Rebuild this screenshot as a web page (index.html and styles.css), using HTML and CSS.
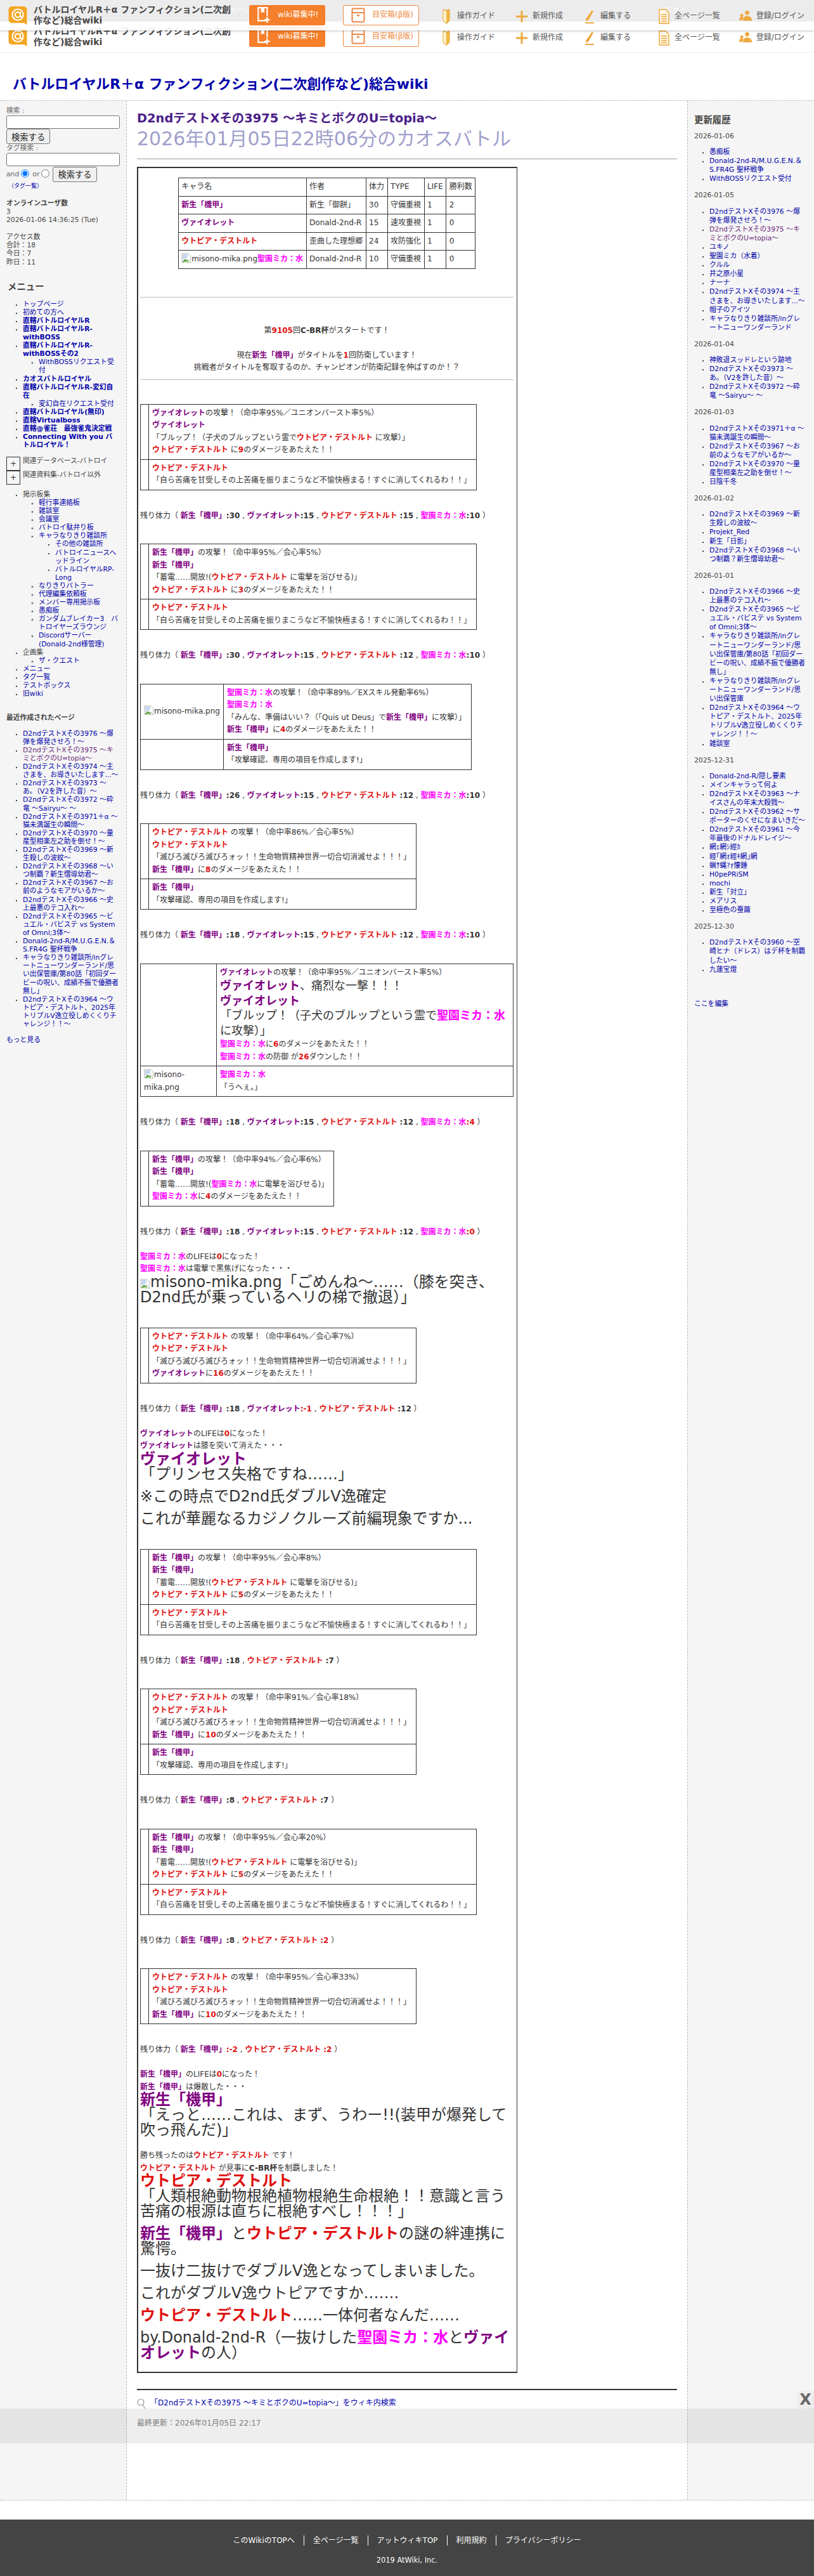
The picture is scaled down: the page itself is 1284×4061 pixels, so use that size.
FILE: index.html
```html
<!DOCTYPE html>
<html lang="ja">
<head>
<meta charset="utf-8">
<title>D2ndテストXその3975 〜キミとボクのU=topia〜</title>
<link rel="stylesheet" href="styles.css">
</head>
<body>
<svg class="sprite" width="0" height="0" aria-hidden="true">
  <symbol id="i-logo" viewBox="0 0 32 32"><path d="M6 0h20a6 6 0 0 1 6 6v26l-5-3H6a6 6 0 0 1-6-6V6a6 6 0 0 1 6-6z" fill="#f5a623"/><circle cx="16" cy="14.500" r="9.500" fill="none" stroke="#fff" stroke-width="2.400"/><circle cx="16" cy="14.500" r="4.500" fill="none" stroke="#fff" stroke-width="2.400"/><path d="M20.500 10v6a3 3 0 0 0 5 2" fill="none" stroke="#fff" stroke-width="2.200"/></symbol>
  <symbol id="i-wiki" viewBox="0 0 20 24"><path d="M14 20H2V1h13v12" fill="none" stroke="#fff" stroke-width="2"/><path d="M6 1v8l2.500-2 2.500 2V1z" fill="#fff"/><path d="M15 14v9M11 18.500h8" stroke="#fff" stroke-width="2"/></symbol>
  <symbol id="i-box" viewBox="0 0 22 24"><rect x="1.500" y="1.500" width="19" height="21" rx="2" fill="none" stroke="#e8894a" stroke-width="2"/><path d="M1.500 8h19" stroke="#e8894a" stroke-width="2"/><rect x="9" y="11" width="4" height="2.500" fill="#e8894a"/></symbol>
  <symbol id="i-guide" viewBox="0 0 14 24"><path d="M2 1c3 0 5 1 5 3 0-2 2-3 5-3v16c0 3-3 5-5 6-2-1-5-3-5-6z" fill="#f0b840" stroke="#e8a33a"/><path d="M2.500 2c2.500 0 4 1 4.500 2.500V22c-2-1-4.500-3-4.500-5z" fill="#fff3d0"/></symbol>
  <symbol id="i-plus" viewBox="0 0 20 24"><path d="M10 3v18M1 12h18" stroke="#eda93f" stroke-width="3"/></symbol>
  <symbol id="i-pen" viewBox="0 0 18 24"><path d="M3 16L13 2l2 1.500L7 18l-4 1z" fill="#eda93f"/><path d="M2 22h14" stroke="#eda93f" stroke-width="2"/></symbol>
  <symbol id="i-doc" viewBox="0 0 18 24"><path d="M2 1h10l5 5v17H2z" fill="#fff8e8" stroke="#eda93f" stroke-width="1.500"/><path d="M5 9h9M5 12.500h9M5 16h9M5 19.500h9" stroke="#eda93f" stroke-width="1.500"/></symbol>
  <symbol id="i-user" viewBox="0 0 26 24"><circle cx="16" cy="5" r="4" fill="#eda93f"/><circle cx="6" cy="10" r="3" fill="#eda93f"/><path d="M8 20c0-6 3-9 8-9s9 3 9 9z" fill="#eda93f"/><path d="M1 19c0-4 2-6 5-6 1 0 2 0 3 1-1 2-2 3-2 5z" fill="#eda93f"/></symbol>
  <symbol id="i-broken" viewBox="0 0 16 16"><path d="M1 1h10l4 4v5l-3 2-2-2-3 3-2-1-4 3z" fill="#fff" stroke="#b5b5b5"/><path d="M2 13l4-4 3 2 3 1-9 3z" fill="#6aa84f"/><path d="M2 2h8v5l-8 3z" fill="#c6d8f0"/><path d="M7 16l3-3 2 2 3-2v2H7z" fill="#6aa84f"/></symbol>
  <symbol id="i-search" viewBox="0 0 14 18"><circle cx="6" cy="7" r="5" fill="none" stroke="#999" stroke-width="1.200"/><path d="M9.500 11l3 6" stroke="#999" stroke-width="1.200"/></symbol>
</svg>

<div class="darkbar"><span class="dark-item">ページ検索</span><span class="dark-item">RSS</span><span class="dark-item dark-right">メニュー</span></div>

<header class="site-header">
  <a class="brand" href="#"><svg class="logo"><use href="#i-logo"/></svg><span class="brand-name">バトルロイヤルR＋α ファンフィクション(二次創作など)総合wiki</span></a>
  <a class="pill pill-fill" href="#"><svg class="pill-icon"><use href="#i-wiki"/></svg>wiki募集中!</a>
  <a class="pill pill-line" href="#"><svg class="pill-icon"><use href="#i-box"/></svg>目安箱(β版)</a>
  <nav class="tools">
    <a class="tool" href="#"><svg class="tool-icon"><use href="#i-guide"/></svg>操作ガイド</a>
    <a class="tool" href="#"><svg class="tool-icon"><use href="#i-plus"/></svg>新規作成</a>
    <a class="tool tool-gap" href="#"><svg class="tool-icon"><use href="#i-pen"/></svg>編集する</a>
    <a class="tool tool-tight" href="#"><svg class="tool-icon"><use href="#i-doc"/></svg>全ページ一覧</a>
    <a class="tool" href="#"><svg class="tool-icon"><use href="#i-user"/></svg>登録/ログイン</a>
  </nav>
</header>

<header class="site-header sticky">
  <a class="brand" href="#"><svg class="logo"><use href="#i-logo"/></svg><span class="brand-name">バトルロイヤルR＋α ファンフィクション(二次創作など)総合wiki</span></a>
  <a class="pill pill-fill" href="#"><svg class="pill-icon"><use href="#i-wiki"/></svg>wiki募集中!</a>
  <a class="pill pill-line" href="#"><svg class="pill-icon"><use href="#i-box"/></svg>目安箱(β版)</a>
  <nav class="tools">
    <a class="tool" href="#"><svg class="tool-icon"><use href="#i-guide"/></svg>操作ガイド</a>
    <a class="tool" href="#"><svg class="tool-icon"><use href="#i-plus"/></svg>新規作成</a>
    <a class="tool tool-gap" href="#"><svg class="tool-icon"><use href="#i-pen"/></svg>編集する</a>
    <a class="tool tool-tight" href="#"><svg class="tool-icon"><use href="#i-doc"/></svg>全ページ一覧</a>
    <a class="tool" href="#"><svg class="tool-icon"><use href="#i-user"/></svg>登録/ログイン</a>
  </nav>
</header>

<h1 class="wiki-title"><a href="#">バトルロイヤルR＋α ファンフィクション(二次創作など)総合wiki</a></h1>

<div class="columns">
  <aside class="side side-left">
    <form class="search">
      <label class="search-label">検索 :</label>
      <input class="text-input" type="text">
      <button class="btn" type="button">検索する</button>
      <label class="search-label">タグ検索 :</label>
      <input class="text-input" type="text">
      <div class="search-opts"><span>and</span><input class="radio" type="radio" name="op" checked><span>or</span><input class="radio" type="radio" name="op"><button class="btn" type="button">検索する</button></div>
      <a class="tag-list" href="#">（タグ一覧）</a>
    </form>
    <p class="stat"><b>オンラインユーザ数</b><br>3<br>2026-01-06 14:36:25 (Tue)</p>
    <p class="stat">アクセス数<br>合計：18<br>今日：7<br>昨日：11</p>
    <h3 class="side-title menu-title">メニュー</h3>
    <ul class="list">
      <li><a href="#">トップページ</a></li>
      <li><a href="#">初めての方へ</a></li>
      <li><a href="#"><b>直轄バトルロイヤルR</b></a></li>
      <li><a href="#"><b>直轄バトルロイヤルR-withBOSS</b></a></li>
      <li><a href="#"><b>直轄バトルロイヤルR-withBOSSその2</b></a>
        <ul><li><a href="#">WithBOSSリクエスト受付</a></li></ul></li>
      <li><a href="#"><b>カオスバトルロイヤル</b></a></li>
      <li><a href="#"><b>直轄バトルロイヤルR-変幻自在</b></a>
        <ul><li><a href="#">変幻自在リクエスト受付</a></li></ul></li>
      <li><a href="#"><b>直轄バトルロイヤル(無印)</b></a></li>
      <li><a href="#"><b>直轄Virtualboss</b></a></li>
      <li><a href="#"><b>直轄@雀荘　最強雀鬼決定戦</b></a></li>
      <li><a href="#"><b>Connecting With you バトルロイヤル！</b></a></li>
    </ul>
    <div class="toggles">
      <div class="toggle"><span class="toggle-btn">+</span><span class="toggle-text">関連データベース-バトロイ</span></div>
      <div class="toggle"><span class="toggle-btn">+</span><span class="toggle-text">関連資料集-バトロイ以外</span></div>
    </div>
    <ul class="list list-boards">
      <li>掲示板集
        <ul>
          <li><a href="#">軽行事連絡板</a></li>
          <li><a href="#">雑談室</a></li>
          <li><a href="#">会議室</a></li>
          <li><a href="#">バトロイ駄弁り板</a></li>
          <li><a href="#">キャラなりきり雑談所</a>
            <ul>
              <li><a href="#">その他の雑談所</a></li>
              <li><a href="#">バトロイニュースヘッドライン</a></li>
              <li><a href="#">バトルロイヤルRP-Long</a></li>
            </ul></li>
          <li><a href="#">なりきりバトラー</a></li>
          <li><a href="#">代理編集依頼板</a></li>
          <li><a href="#">メンバー専用掲示板</a></li>
          <li><a href="#">愚痴板</a></li>
          <li><a href="#">ガンダムブレイカー3　バトロイヤーズラウンジ</a></li>
          <li><a href="#">Discordサーバー(Donald-2nd様管理)</a></li>
        </ul></li>
      <li>企画集
        <ul><li><a href="#">ザ・クエスト</a></li></ul></li>
      <li><a href="#">メニュー</a></li>
      <li><a href="#">タグ一覧</a></li>
      <li><a href="#">テストボックス</a></li>
      <li><a href="#">旧wiki</a></li>
    </ul>
    <h4 class="recent-title">最近作成されたページ</h4>
    <ul class="list list-recent">
      <li><a href="#">D2ndテストXその3976 〜爆弾を爆発させろ！〜</a></li>
      <li><a class="seen" href="#">D2ndテストXその3975 〜キミとボクのU=topia〜</a></li>
      <li><a href="#">D2ndテストXその3974 〜主さまを、お導きいたします...〜</a></li>
      <li><a href="#">D2ndテストXその3973 〜あ。（V2を許した音）〜</a></li>
      <li><a href="#">D2ndテストXその3972 〜砕竜 〜Sairyu〜 〜</a></li>
      <li><a href="#">D2ndテストXその3971＋α 〜猫未満誕生の瞬間〜</a></li>
      <li><a href="#">D2ndテストXその3970 〜量産型相楽左之助を倒せ！〜</a></li>
      <li><a href="#">D2ndテストXその3969 〜新生殺しの波紋〜</a></li>
      <li><a href="#">D2ndテストXその3968 〜いつ制覇？新生慴導幼君〜</a></li>
      <li><a href="#">D2ndテストXその3967 〜お前のようなモアがいるか〜</a></li>
      <li><a href="#">D2ndテストXその3966 〜史上最悪のテコ入れ〜</a></li>
      <li><a href="#">D2ndテストXその3965 〜ビュエル・バビステ vs System of Omni;3体〜</a></li>
      <li><a href="#">Donald-2nd-R/M.U.G.E.N.＆S.FR4G 聖杯戦争</a></li>
      <li><a href="#">キャラなりきり雑談所/inグレートニューワンダーランド/思い出保管庫/第80話「初回ダービーの呪い、成績不振で優勝者無し」</a></li>
      <li><a href="#">D2ndテストXその3964 〜ウトピア・デストルト、2025年トリプルV逸立役しめくくりチャレンジ！！〜</a></li>
    </ul>
    <p class="more"><a href="#">もっと見る</a></p>
  </aside>

  <main class="main">
    <h2 class="page-title">D2ndテストXその3975 〜キミとボクのU=topia〜</h2>
    <div class="battle-title">2026年01月05日22時06分のカオスバトル</div>
    <hr class="rule">
    <div class="arena">
      <table class="chara">
        <tr><td>キャラ名</td><td>作者</td><td>体力</td><td>TYPE</td><td>LIFE</td><td>勝利数</td></tr>
        <tr><td><b class="a">新生「機甲」</b></td><td>新生「御餅」</td><td>30</td><td>守備重視</td><td>1</td><td>2</td></tr>
        <tr><td><b class="v">ヴァイオレット</b></td><td>Donald-2nd-R</td><td>15</td><td>速攻重視</td><td>1</td><td>0</td></tr>
        <tr><td><b class="u">ウトピア・デストルト</b></td><td>歪曲した理想郷</td><td>24</td><td>攻防強化</td><td>1</td><td>0</td></tr>
        <tr><td><svg class="broken"><use href="#i-broken"/></svg>misono-mika.png<b class="m">聖園ミカ：水</b></td><td>Donald-2nd-R</td><td>10</td><td>守備重視</td><td>1</td><td>0</td></tr>
      </table>
      <hr class="thin thin-first">
      <p class="start">第<b class="n">9105</b>回<b>C-BR杯</b>がスタートです！<br><br>現在<b class="a">新生「機甲」</b>がタイトルを<b class="n">1</b>回防衛しています！<br>挑戦者がタイトルを奪取するのか、チャンピオンが防衛記録を伸ばすのか！？</p>
      <hr class="thin thin-last">

      <table class="log">
        <tr><td class="pic"></td><td><b class="v">ヴァイオレット</b>の攻撃！（命中率95%／ユニオンバースト率5%）<br><b class="v">ヴァイオレット</b><br>「ブルップ！（子犬のブルップという霊で<b class="u">ウトピア・デストルト</b> に攻撃）」<br><b class="u">ウトピア・デストルト</b> に<b class="n">9</b>のダメージをあたえた！！</td></tr>
        <tr><td class="pic"></td><td><b class="u">ウトピア・デストルト</b><br>「自ら苦痛を甘受しその上苦痛を振りまこうなど不愉快極まる！すぐに消してくれるわ！！」</td></tr>
      </table>
      <p class="hp">残り体力（ <b class="a">新生「機甲」</b><b>:30</b> , <b class="v">ヴァイオレット</b><b>:15</b> , <b class="u">ウトピア・デストルト</b> <b>:15</b> , <b class="m">聖園ミカ：水</b><b>:10</b> ）</p>

      <table class="log">
        <tr><td class="pic"></td><td><b class="a">新生「機甲」</b>の攻撃！（命中率95%／会心率5%）<br><b class="a">新生「機甲」</b><br>「蓄電……開放!(<b class="u">ウトピア・デストルト</b> に電撃を浴びせる)」<br><b class="u">ウトピア・デストルト</b> に<b class="n">3</b>のダメージをあたえた！！</td></tr>
        <tr><td class="pic"></td><td><b class="u">ウトピア・デストルト</b><br>「自ら苦痛を甘受しその上苦痛を振りまこうなど不愉快極まる！すぐに消してくれるわ！！」</td></tr>
      </table>
      <p class="hp">残り体力（ <b class="a">新生「機甲」</b><b>:30</b> , <b class="v">ヴァイオレット</b><b>:15</b> , <b class="u">ウトピア・デストルト</b> <b>:12</b> , <b class="m">聖園ミカ：水</b><b>:10</b> ）</p>

      <table class="log">
        <tr><td class="pic-img"><svg class="broken"><use href="#i-broken"/></svg>misono-mika.png</td><td><b class="m">聖園ミカ：水</b>の攻撃！（命中率89%／EXスキル発動率6%）<br><b class="m">聖園ミカ：水</b><br>「みんな、準備はいい？（「Quis ut Deus」で<b class="a">新生「機甲」</b>に攻撃）」<br><b class="a">新生「機甲」</b>に<b class="n">4</b>のダメージをあたえた！！</td></tr>
        <tr><td class="pic-img"></td><td><b class="a">新生「機甲」</b><br>「攻撃確認、専用の項目を作成します!」</td></tr>
      </table>
      <p class="hp">残り体力（ <b class="a">新生「機甲」</b><b>:26</b> , <b class="v">ヴァイオレット</b><b>:15</b> , <b class="u">ウトピア・デストルト</b> <b>:12</b> , <b class="m">聖園ミカ：水</b><b>:10</b> ）</p>

      <table class="log">
        <tr><td class="pic"></td><td><b class="u">ウトピア・デストルト</b> の攻撃！（命中率86%／会心率5%）<br><b class="u">ウトピア・デストルト</b><br>「滅びろ滅びろ滅びろォッ！！生命物質精神世界一切合切消滅せよ！！！」<br><b class="a">新生「機甲」</b>に<b class="n">8</b>のダメージをあたえた！！</td></tr>
        <tr><td class="pic"></td><td><b class="a">新生「機甲」</b><br>「攻撃確認、専用の項目を作成します!」</td></tr>
      </table>
      <p class="hp">残り体力（ <b class="a">新生「機甲」</b><b>:18</b> , <b class="v">ヴァイオレット</b><b>:15</b> , <b class="u">ウトピア・デストルト</b> <b>:12</b> , <b class="m">聖園ミカ：水</b><b>:10</b> ）</p>

      <table class="log log-full">
        <tr><td class="pic-wrap"></td><td><b class="v">ヴァイオレット</b>の攻撃！（命中率95%／ユニオンバースト率5%）<br><span class="mid"><b class="v">ヴァイオレット</b>、痛烈な一撃！！！<br><b class="v">ヴァイオレット</b><br>「ブルップ！（子犬のブルップという霊で<b class="m">聖園ミカ：水</b>に攻撃）」</span><br><b class="m">聖園ミカ：水</b>に<b class="n">6</b>のダメージをあたえた！！<br><b class="m">聖園ミカ：水</b>の防御 が<b class="n">26</b>ダウンした！！</td></tr>
        <tr><td class="pic-wrap"><svg class="broken"><use href="#i-broken"/></svg>misono-mika.png</td><td><b class="m">聖園ミカ：水</b><br>「うへぇ。」</td></tr>
      </table>
      <p class="hp">残り体力（ <b class="a">新生「機甲」</b><b>:18</b> , <b class="v">ヴァイオレット</b><b>:15</b> , <b class="u">ウトピア・デストルト</b> <b>:12</b> , <b class="m">聖園ミカ：水</b><b class="n">:4</b> ）</p>

      <table class="log">
        <tr><td class="pic"></td><td><b class="a">新生「機甲」</b>の攻撃！（命中率94%／会心率6%）<br><b class="a">新生「機甲」</b><br>「蓄電……開放!(<b class="m">聖園ミカ：水</b>に電撃を浴びせる)」<br><b class="m">聖園ミカ：水</b>に<b class="n">4</b>のダメージをあたえた！！</td></tr>
      </table>
      <p class="hp hp-tight">残り体力（ <b class="a">新生「機甲」</b><b>:18</b> , <b class="v">ヴァイオレット</b><b>:15</b> , <b class="u">ウトピア・デストルト</b> <b>:12</b> , <b class="m">聖園ミカ：水</b><b class="n">:0</b> ）</p>
      <p class="line"><b class="m">聖園ミカ：水</b>のLIFEは<b class="n">0</b>になった！<br><b class="m">聖園ミカ：水</b>は電撃で黒焦げになった・・・</p>
      <p class="large"><svg class="broken"><use href="#i-broken"/></svg>misono-mika.png「ごめんね〜……（膝を突き、D2nd氏が乗っているヘリの梯で撤退）」</p>

      <table class="log log-after">
        <tr><td class="pic"></td><td><b class="u">ウトピア・デストルト</b> の攻撃！（命中率64%／会心率7%）<br><b class="u">ウトピア・デストルト</b><br>「滅びろ滅びろ滅びろォッ！！生命物質精神世界一切合切消滅せよ！！！」<br><b class="v">ヴァイオレット</b>に<b class="n">16</b>のダメージをあたえた！！</td></tr>
      </table>
      <p class="hp hp-tight">残り体力（ <b class="a">新生「機甲」</b><b>:18</b> , <b class="v">ヴァイオレット</b><b class="n">:-1</b> , <b class="u">ウトピア・デストルト</b> <b>:12</b> ）</p>
      <p class="line"><b class="v">ヴァイオレット</b>のLIFEは<b class="n">0</b>になった！<br><b class="v">ヴァイオレット</b>は膝を突いて消えた・・・</p>
      <p class="large"><b class="v">ヴァイオレット</b><br>「プリンセス失格ですね……」</p>
      <p class="large large-next">※この時点でD2nd氏ダブルV逸確定</p>
      <p class="large large-next">これが華麗なるカジノクルーズ前編現象ですか...</p>

      <table class="log log-after">
        <tr><td class="pic"></td><td><b class="a">新生「機甲」</b>の攻撃！（命中率95%／会心率8%）<br><b class="a">新生「機甲」</b><br>「蓄電……開放!(<b class="u">ウトピア・デストルト</b> に電撃を浴びせる)」<br><b class="u">ウトピア・デストルト</b> に<b class="n">5</b>のダメージをあたえた！！</td></tr>
        <tr><td class="pic"></td><td><b class="u">ウトピア・デストルト</b><br>「自ら苦痛を甘受しその上苦痛を振りまこうなど不愉快極まる！すぐに消してくれるわ！！」</td></tr>
      </table>
      <p class="hp">残り体力（ <b class="a">新生「機甲」</b><b>:18</b> , <b class="u">ウトピア・デストルト</b> <b>:7</b> ）</p>

      <table class="log">
        <tr><td class="pic"></td><td><b class="u">ウトピア・デストルト</b> の攻撃！（命中率91%／会心率18%）<br><b class="u">ウトピア・デストルト</b><br>「滅びろ滅びろ滅びろォッ！！生命物質精神世界一切合切消滅せよ！！！」<br><b class="a">新生「機甲」</b>に<b class="n">10</b>のダメージをあたえた！！</td></tr>
        <tr><td class="pic"></td><td><b class="a">新生「機甲」</b><br>「攻撃確認、専用の項目を作成します!」</td></tr>
      </table>
      <p class="hp">残り体力（ <b class="a">新生「機甲」</b><b>:8</b> , <b class="u">ウトピア・デストルト</b> <b>:7</b> ）</p>

      <table class="log">
        <tr><td class="pic"></td><td><b class="a">新生「機甲」</b>の攻撃！（命中率95%／会心率20%）<br><b class="a">新生「機甲」</b><br>「蓄電……開放!(<b class="u">ウトピア・デストルト</b> に電撃を浴びせる)」<br><b class="u">ウトピア・デストルト</b> に<b class="n">5</b>のダメージをあたえた！！</td></tr>
        <tr><td class="pic"></td><td><b class="u">ウトピア・デストルト</b><br>「自ら苦痛を甘受しその上苦痛を振りまこうなど不愉快極まる！すぐに消してくれるわ！！」</td></tr>
      </table>
      <p class="hp">残り体力（ <b class="a">新生「機甲」</b><b>:8</b> , <b class="u">ウトピア・デストルト</b> <b class="n">:2</b> ）</p>

      <table class="log">
        <tr><td class="pic"></td><td><b class="u">ウトピア・デストルト</b> の攻撃！（命中率95%／会心率33%）<br><b class="u">ウトピア・デストルト</b><br>「滅びろ滅びろ滅びろォッ！！生命物質精神世界一切合切消滅せよ！！！」<br><b class="a">新生「機甲」</b>に<b class="n">10</b>のダメージをあたえた！！</td></tr>
      </table>
      <p class="hp hp-tight">残り体力（ <b class="a">新生「機甲」</b><b class="n">:-2</b> , <b class="u">ウトピア・デストルト</b> <b class="n">:2</b> ）</p>
      <p class="line"><b class="a">新生「機甲」</b>のLIFEは<b class="n">0</b>になった！<br><b class="a">新生「機甲」</b>は爆散した・・・</p>
      <p class="large"><b class="a">新生「機甲」</b><br>「えっと……これは、まず、うわー!!(装甲が爆発して吹っ飛んだ)」</p>
      <p class="line line-gap">勝ち残ったのは<b class="u">ウトピア・デストルト</b> です！<br><b class="u">ウトピア・デストルト</b> が見事に<b>C-BR杯</b>を制覇しました！</p>
      <p class="large"><b class="u">ウトピア・デストルト</b><br>「人類根絶動物根絶植物根絶生命根絶！！意識と言う苦痛の根源は直ちに根絶すべし！！！」</p>
      <p class="large large-next"><b class="a">新生「機甲」</b>と<b class="u">ウトピア・デストルト</b>の謎の絆連携に驚愕。</p>
      <p class="large large-next">一抜け二抜けでダブルV逸となってしまいました。</p>
      <p class="large large-next">これがダブルV逸ウトピアですか…….</p>
      <p class="large large-next"><b class="u">ウトピア・デストルト</b>……一体何者なんだ……</p>
      <p class="large large-next">by.Donald-2nd-R（一抜けした<b class="m">聖園ミカ：水</b>と<b class="v">ヴァイオレット</b>の人）</p>
    </div>
    <hr class="rule-dark">
    <p class="wiki-search"><svg class="search-icon"><use href="#i-search"/></svg><a href="#">「D2ndテストXその3975 〜キミとボクのU=topia〜」をウィキ内検索</a></p>
    <p class="updated">最終更新：2026年01月05日 22:17</p>
  </main>

  <aside class="side side-right">
    <h3 class="side-title">更新履歴</h3>
    <p class="date date-first">2026-01-06</p>
    <ul class="list">
      <li><a href="#">愚痴板</a></li>
      <li><a href="#">Donald-2nd-R/M.U.G.E.N.＆S.FR4G 聖杯戦争</a></li>
      <li><a href="#">WithBOSSリクエスト受付</a></li>
    </ul>
    <p class="date">2026-01-05</p>
    <ul class="list">
      <li><a href="#">D2ndテストXその3976 〜爆弾を爆発させろ！〜</a></li>
      <li><a class="seen" href="#">D2ndテストXその3975 〜キミとボクのU=topia〜</a></li>
      <li><a href="#">ユキノ</a></li>
      <li><a href="#">聖園ミカ（水着）</a></li>
      <li><a href="#">クルル</a></li>
      <li><a href="#">井之原小星</a></li>
      <li><a href="#">ナーナ</a></li>
      <li><a href="#">D2ndテストXその3974 〜主さまを、お導きいたします...〜</a></li>
      <li><a href="#">帽子のアイツ</a></li>
      <li><a href="#">キャラなりきり雑談所/inグレートニューワンダーランド</a></li>
    </ul>
    <p class="date">2026-01-04</p>
    <ul class="list">
      <li><a href="#">神敗退スッドレという跡地</a></li>
      <li><a href="#">D2ndテストXその3973 〜あ。（V2を許した音）〜</a></li>
      <li><a href="#">D2ndテストXその3972 〜砕竜 〜Sairyu〜 〜</a></li>
    </ul>
    <p class="date">2026-01-03</p>
    <ul class="list">
      <li><a href="#">D2ndテストXその3971＋α 〜猫未満誕生の瞬間〜</a></li>
      <li><a href="#">D2ndテストXその3967 〜お前のようなモアがいるか〜</a></li>
      <li><a href="#">D2ndテストXその3970 〜量産型相楽左之助を倒せ！〜</a></li>
      <li><a href="#">日陰千冬</a></li>
    </ul>
    <p class="date">2026-01-02</p>
    <ul class="list">
      <li><a href="#">D2ndテストXその3969 〜新生殺しの波紋〜</a></li>
      <li><a href="#">Projekt_Red</a></li>
      <li><a href="#">新生「日影」</a></li>
      <li><a href="#">D2ndテストXその3968 〜いつ制覇？新生慴導幼君〜</a></li>
    </ul>
    <p class="date">2026-01-01</p>
    <ul class="list">
      <li><a href="#">D2ndテストXその3966 〜史上最悪のテコ入れ〜</a></li>
      <li><a href="#">D2ndテストXその3965 〜ビュエル・バビステ vs System of Omni;3体〜</a></li>
      <li><a href="#">キャラなりきり雑談所/inグレートニューワンダーランド/思い出保管庫/第80話「初回ダービーの呪い、成績不振で優勝者無し」</a></li>
      <li><a href="#">キャラなりきり雑談所/inグレートニューワンダーランド/思い出保管庫</a></li>
      <li><a href="#">D2ndテストXその3964 〜ウトピア・デストルト、2025年トリプルV逸立役しめくくりチャレンジ！！〜</a></li>
      <li><a href="#">雑談室</a></li>
    </ul>
    <p class="date">2025-12-31</p>
    <ul class="list">
      <li><a href="#">Donald-2nd-R/隠し要素</a></li>
      <li><a href="#">メインキャラって何よ</a></li>
      <li><a href="#">D2ndテストXその3963 〜ナイスさんの年末大殺戮〜</a></li>
      <li><a href="#">D2ndテストXその3962 〜サポーターのくせになまいきだ〜</a></li>
      <li><a href="#">D2ndテストXその3961 〜今年最後のドナルドレイジ〜</a></li>
      <li><a href="#">網ｪ網ｼ經ｶ</a></li>
      <li><a href="#">經｢網ｫ經ｷ網｣網</a></li>
      <li><a href="#">蝋ｻ蝿?ｫ懐錘</a></li>
      <li><a href="#">H0pePRiSM</a></li>
      <li><a href="#">mochi</a></li>
      <li><a href="#">新生「対立」</a></li>
      <li><a href="#">メアリス</a></li>
      <li><a href="#">至極色の蚕繭</a></li>
    </ul>
    <p class="date">2025-12-30</p>
    <ul class="list">
      <li><a href="#">D2ndテストXその3960 〜空崎ヒナ（ドレス）はデ杯を制覇したい〜</a></li>
      <li><a href="#">九蓮宝燈</a></li>
    </ul>
    <p class="edit-here"><a href="#">ここを編集</a></p>
  </aside>
</div>

<footer class="footer">
  <nav class="footer-nav">
    <a class="footer-link" href="#">このWikiのTOPへ</a>
    <a class="footer-link" href="#">全ページ一覧</a>
    <a class="footer-link" href="#">アットウィキTOP</a>
    <a class="footer-link" href="#">利用規約</a>
    <a class="footer-link" href="#">プライバシーポリシー</a>
  </nav>
  <p class="copyright">2019 AtWiki, Inc.</p>
</footer>

<div class="ad-band"></div>
<button class="ad-close" type="button">X</button>
</body>
</html>
```

FILE: styles.css
```css
* { box-sizing: border-box; }
html, body { margin: 0; padding: 0; }
body {
  position: relative;
  font-family: "DejaVu Sans", "Noto Sans CJK JP", sans-serif;
  font-size: 12px;
  line-height: 19.5px;
  color: #333;
  background: #fff;
}
a { color: #0000aa; text-decoration: none; }
a.seen { color: #6b2a7b; }
p { margin: 0; }
.sprite { position: absolute; }

/* top bars */
.darkbar {
  height: 34px;
  background: #444;
  color: #fff;
  display: flex;
  align-items: center;
  padding-left: 360px;
  gap: 20px;
  font-size: 12px;
}
.dark-right { margin-left: auto; margin-right: 200px; }
.site-header {
  height: 49px;
  display: flex;
  align-items: center;
  padding: 0 0 0 12px;
  background: #fff;
  border-bottom: 1px solid #eee;
}
.sticky {
  position: absolute;
  top: 0; left: 0; right: 0;
  height: 48px;
  border-bottom: 0;
  background: rgba(255, 255, 255, .9);
  box-shadow: 0 1px 3px rgba(0, 0, 0, .25);
}
.brand { display: flex; align-items: center; width: 381px; color: #444; }
.logo { width: 32px; height: 29px; flex: none; }
.brand-name { margin-left: 9px; width: 318px; font-size: 14px; font-weight: bold; line-height: 17px; }
.pill {
  width: 120px; height: 32px;
  display: flex; align-items: center; justify-content: flex-start;
  padding-left: 12px;
  border-radius: 3px;
  font-size: 12px;
  white-space: nowrap;
}
.pill-fill { background: #f57f2a; color: #fff; margin-right: 28px; }
.pill-line { background: #fff; color: #ef8a3f; border: 1px solid #ef8a3f; }
.pill-icon { width: 22px; height: 26px; margin-right: 11px; flex: none; }
.tools { display: flex; margin-left: 32px; }
.tool { display: flex; align-items: center; color: #555; font-size: 12px; margin-right: 31px; white-space: nowrap; padding-top: 3px; }
.tool:last-child { margin-right: 0; }
.tool-gap { margin-right: 41px; }
.tool-tight { margin-right: 29px; }
.tool-icon { width: 22px; height: 24px; margin-right: 6px; flex: none; }

.wiki-title {
  margin: 36px 0 11px 20px;
  font-size: 21.9px;
  line-height: 28px;
  font-weight: bold;
}

/* columns */
.columns {
  display: flex;
  border-top: 1px dotted #aaa;
  border-bottom: 1px dotted #aaa;
}
.side { width: 200px; flex: none; background: #f5f5f5; font-size: 10.8px; line-height: 13.1px; color: #444; }
.side-left { border-right: 1px dashed #bbb; padding: 9px 11px 0 10px; }
.side-right { width: 200px; border-left: 1px dashed #bbb; padding: 22px 12px 0 10px; line-height: 14.1px; }
.main { flex: 1; min-width: 0; padding: 16px 16px 110.5px; }

/* left search */
.search-label { display: block; height: 14px; color: #666; line-height: 13px; }
.text-input { display: block; width: 179px; height: 21px; padding: 0 2px; border: 1px solid #777; border-radius: 3px; background: #fff; }
.btn { display: block; height: 24px; padding: 0 7px; font: 13.3px "DejaVu Sans", "Noto Sans CJK JP", sans-serif; color: #222; background: #efefef; border: 1px solid #767676; border-radius: 3px; white-space: nowrap; }
.search-opts { display: flex; align-items: center; height: 25px; color: #666; }
.radio { width: 13px; height: 13px; margin: 0 5px 3px 3px; }
.tag-list { display: block; margin: 0 0 0 3px; font-size: 9px; line-height: 13px; }
.stat { margin-top: 14px; }
.side-title { margin: 0; font-size: 14.4px; line-height: 17px; font-weight: bold; color: #444; }
.menu-title { margin: 24px 0 0 2px; }
.list { margin: 12px 0 11px; padding: 0 0 0 26px; list-style: square; }
.list ul { margin: 0; padding: 0 0 0 25px; list-style: circle; }
.list ul ul { list-style: square; padding-left: 26px; }
.list li::marker { font-size: 8px; }
.list-boards { margin-top: 8.5px; }
.list-recent { margin-top: 12px; }
.toggles { margin-top: 12px; }
.toggle { display: flex; height: 22px; }
.toggle-btn { width: 22px; height: 22px; border: 1px solid #333; display: flex; align-items: center; justify-content: center; color: #333; font-size: 12px; flex: none; }
.toggle-text { margin: 0 0 0 4px; }
.recent-title { margin: 24.5px 0 0; font-size: 10.8px; font-weight: bold; line-height: 13px; color: #444; }
.more { margin-top: 11.5px; }
.date { margin: 12px 0 0; color: #444; }
.date-first { margin-top: 10px; }
.side-right .list { margin: 11px 0 0; padding-left: 24px; }
.edit-here { margin-top: 40.5px; }

/* main */
.page-title { margin: 0; font-size: 19.4px; line-height: 24px; color: #4b2088; font-weight: bold; }
.battle-title { font-size: 30px; line-height: 36px; color: #a0a0cc; margin-top: 2px; }
.rule { margin: 13px 0 12px; border: 0; border-top: 1px solid #999; }
.arena {
  width: 600px;
  border: 2px solid #333;
  border-right-width: 1px;
  padding: 15px 5px 18px 3px;
}
table { border-collapse: collapse; font-size: 12px; }
td { border: 1px solid #333; padding: 4px 5px; }
.chara { margin: 0 auto; white-space: nowrap; }
.chara td { padding: 4px 4.5px; }
.broken { width: 16px; height: 16px; vertical-align: -3px; }
.thin { border: 0; border-top: 1px solid #bbb; }
.thin-first { margin: 44px 0 43px; }
.thin-last { margin: 8px 0 38px; }
.start { text-align: center; }
.a, .v { color: #800080; }
.u, .n { color: #e01010; }
.m { color: #f0f; }
.log { margin: 0; }
.log td { padding: 4px 8px 4px 5px; }
.log-full { width: 100%; }
.log-after { margin-top: 36px; }
.log .pic { width: 13px; padding: 0; }
.log .pic-img { white-space: nowrap; padding-right: 5px; }
.log .pic-wrap { width: 120px; padding-right: 5px; }
.mid { font-size: 18px; line-height: 21.5px; }
.hp { margin: 31px 0 34px; }
.hp-tight { margin-bottom: 19.5px; }
.line + .large { margin-top: -2px; }
.line-gap { margin-top: 19px; }
.large { font-size: 24px; line-height: 24px; }
.large-next { margin-top: 11px; }

.rule-dark { margin: 25px 0 0; border: 0; border-top: 2px solid #333; }
.wiki-search { margin-top: 11px; line-height: 19px; display: flex; align-items: center; }
.search-icon { width: 14px; height: 18px; margin-right: 7px; flex: none; }
.updated { margin-top: 12.5px; color: #888; }

/* footer */
.footer { margin-top: 30px; height: 95px; background: #444; color: #fff; text-align: center; padding-top: 25px; font-size: 12px; line-height: 16px; }
.footer-nav { display: flex; justify-content: center; }
.footer-link { color: #fff; padding: 0 14px; border-right: 1px solid #fff; }
.footer-link:last-child { border-right: 0; }
.copyright { margin-top: 15px; font-size: 11.4px; }

/* overlays */
.ad-band { position: absolute; top: 3797px; left: 0; right: 0; height: 55px; background: rgba(0, 0, 0, .065); }
.ad-close { position: absolute; top: 3769px; right: 0; width: 27px; height: 28px; padding: 0; border: 0; border-radius: 6px 0 0 0; background: #eee; color: #666; font: bold 24px "DejaVu Sans", sans-serif; }
```
